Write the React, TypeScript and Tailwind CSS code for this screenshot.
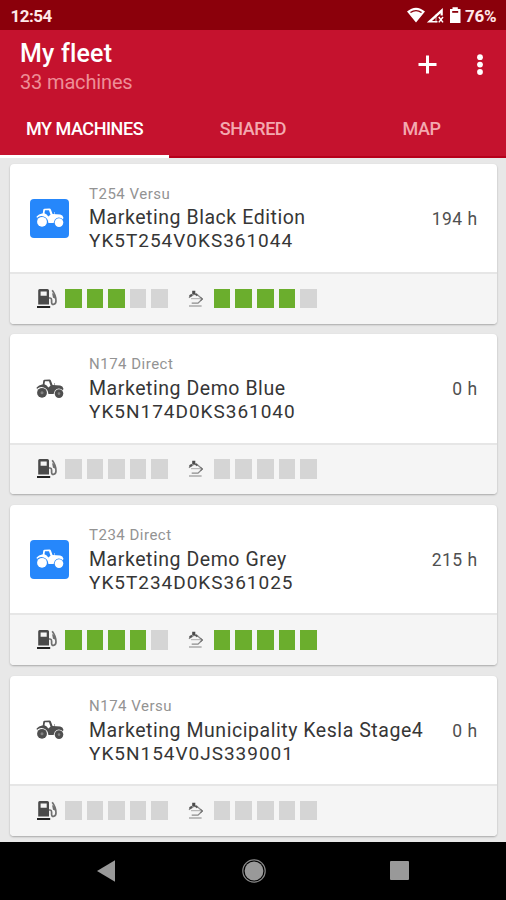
import React from "react";

type Machine = {
  model: string;
  name: string;
  serial: string;
  hours: string;
  active: boolean;
  fuel: number;
  adblue: number;
};

const machines: Machine[] = [
  { model: "T254 Versu", name: "Marketing Black Edition", serial: "YK5T254V0KS361044", hours: "194 h", active: true, fuel: 3, adblue: 4 },
  { model: "N174 Direct", name: "Marketing Demo Blue", serial: "YK5N174D0KS361040", hours: "0 h", active: false, fuel: 0, adblue: 0 },
  { model: "T234 Direct", name: "Marketing Demo Grey", serial: "YK5T234D0KS361025", hours: "215 h", active: true, fuel: 4, adblue: 5 },
  { model: "N174 Versu", name: "Marketing Municipality Kesla Stage4", serial: "YK5N154V0JS339001", hours: "0 h", active: false, fuel: 0, adblue: 0 },
];

function Tractor() {
  return (
    <svg width="28" height="20" viewBox="0 0 28 20" fill="currentColor" className="block">
      <path fillRule="evenodd" d="M.6 8.6 Q2.5 6.2 6.8 5.2 L7.2 2 Q7.4.9 8.5.8 L13.4.6 Q14.5.6 14.9 1.6 L16.6 6 L24.2 6.5 Q26.8 7 27.4 9.4 L27 11.2 Q22.5 7.8 18.9 11.5 L17.6 15 H12.4 Q12 9.9 7.8 8.5 Q4 7.3.9 9.9 Z M9 2.3 L8.5 5.3 Q11 6.4 12.3 8.4 L14.5 6.8 L13 2.3 Z" />
      <circle cx="6" cy="13.8" r="4.9" />
      <circle cx="23" cy="14.6" r="4.3" />
      <path d="M18.2 4 h.8 v3 h-.8z" opacity=".6" />
      <circle cx="6" cy="13.8" r="1.5" className="fill-white" opacity=".3" />
      <circle cx="23" cy="14.6" r="1.3" className="fill-white" opacity=".3" />
    </svg>
  );
}

function FuelPump() {
  return (
    <svg width="21" height="20" viewBox="0 0 21 20" className="block" fill="#4a4a4a">
      <path fillRule="evenodd" d="M1.2 1.5 Q1.2 0 2.6 0 H10.4 Q12 0 12 1.5 V15.6 H1.2 Z M3.6 2.4 V6.8 H9.7 V2.4 Z" />
      <path d="M0 17 h13.2 v2 H0z" fill="#222" />
      <path d="M12 9 H13 Q14.6 9.2 14.6 11 V13.4 Q14.8 15.7 16.5 15.4 Q18.9 15 19 12 Q19.1 6.5 15.2 1.3" fill="none" stroke="#707070" strokeWidth="1.7" />
      <path d="M15 4 L18 6.1 L18.4 9.8 L16 8.7 Z" fill="#707070" />
    </svg>
  );
}

function FluidIcon() {
  return (
    <svg width="16" height="18" viewBox="0 0 16 18" className="block" fill="none" stroke="#8c8c8c" strokeWidth="1.3">
      <path d="M1 7.8 L4 5.2 L8.5 3.9 L14.3 9 L10 13.2 H3.7" />
      <path d="M4.2 .8 H7.3 V4.2 H4.2Z" fill="#4a4a4a" stroke="none" />
      <path d="M1.2 5.2 L3.6 3.7 L4.6 6 L1.6 7.3Z" fill="#555" stroke="none" />
      <path d="M7.3 4 L9.4 5.6" stroke="#555" strokeWidth="1.6" />
      <path d="M3 8.7 H12.2" strokeWidth="1" stroke="#aaa" />
      <path d="M12.2 7.2 L14.3 9 L12.4 10.8" stroke="#777" />
      <path d="M1 16 H13.6" strokeWidth="1.6" stroke="#aaa" />
    </svg>
  );
}

function Level({ value }: { value: number }) {
  return (
    <div className="flex gap-[5.1px]">
      {[0, 1, 2, 3, 4].map((i) => (
        <div key={i} className={i < value ? "h-[19.5px] w-[16.5px] bg-[#6bae2d]" : "h-[19.5px] w-[16.5px] bg-[#d5d5d5]"} />
      ))}
    </div>
  );
}

function MachineCard({ m }: { m: Machine }) {
  return (
    <div className="h-[160px] w-[487px] shrink-0 overflow-hidden rounded-[4px] bg-white shadow-[0_1px_2px_rgba(0,0,0,0.28)]">
      <div className="flex h-[110.4px] items-start border-b-2 border-[#e6e6e6] pl-5 pr-[19.5px]">
        <div className={m.active ? "mt-[35px] flex h-[39px] w-[39px] items-center justify-center rounded-[4px] bg-[#2687fb] text-white" : "mt-[35px] flex h-[39px] w-[39px] items-center justify-center text-[#4f4f4f]"}>
          <Tractor />
        </div>
        <div className="ml-5 grow whitespace-nowrap">
          <div className="mt-[20.2px] h-[20px] text-[15px] leading-[20px] tracking-[0.5px] text-[#939393]">{m.model}</div>
          <div className="mt-[2.8px] h-[23px] text-[19.5px] leading-[23px] tracking-[0.55px] text-[#363636]">{m.name}</div>
          <div className="h-[23px] text-[19px] leading-[23px] tracking-[0.98px] text-[#363636]">{m.serial}</div>
        </div>
        <div className="mt-[44px] whitespace-nowrap text-[17.5px] leading-[23px] tracking-[0.45px] text-[#505050]">{m.hours}</div>
      </div>
      <div className="flex h-[50px] bg-[#f5f5f5] pl-[27px] pt-[14.8px]">
        <div className="w-[28px]"><FuelPump /></div>
        <Level value={m.fuel} />
        <div className="ml-[20px] w-[26px] pt-[1px]"><FluidIcon /></div>
        <Level value={m.adblue} />
      </div>
    </div>
  );
}

export default function App() {
  return (
    <div className="flex h-[900px] w-[506px] flex-col overflow-hidden bg-[#e8e8e8] font-[Roboto,sans-serif]">
      <div className="flex h-[30px] shrink-0 items-center justify-between bg-[#8b000b] pl-[10.5px] pr-[9.5px] pt-[2px] text-[17px] font-bold leading-[20px] text-[#ffe9e9]">
        <span className="tracking-[-0.5px]">12:54</span>
        <div className="flex items-center">
          <svg width="54" height="18" viewBox="0 0 54 18" fill="#fff" className="mr-[4px] block">
            <path fillRule="evenodd" d="M0 4.6 Q9-3.2 18 4.6 L9 15.6 Z M3 4.9 L3.9 6 Q9 2.6 14.1 6 L15 4.9 Q9 1 3 4.9Z" />
            <path fillRule="evenodd" d="M19.8 15.6 L35.8 1 V8.5 H33.6 V6.2 L25 14 H30.5 V15.6 Z" />
            <path d="M31.8 10 L36 15.4 M36 10 L31.8 15.4" stroke="#fff" strokeWidth="1.5" />
            <path d="M29 7.5 V15.5" stroke="#fff" strokeWidth="1.2" opacity=".6" />
            <path d="M43 2 H45.5 V.2 H50.8 V2 H53.5 V16 H43Z" />
            <path d="M45.2 4 h6 v1.8 h-6z" fill="#8b000b" />
          </svg>
          <span className="tracking-[-0.2px]">76%</span>
        </div>
      </div>
      <div className="flex h-[127.5px] shrink-0 flex-col bg-[#c5122e] shadow-[inset_0_-2px_0_#b6001b]">
        <div className="flex h-[70px] shrink-0 justify-between">
          <div className="whitespace-nowrap pl-5">
            <div className="mt-[9px] text-[25px] font-medium leading-[29px] tracking-[0.2px] text-white">My fleet</div>
            <div className="mt-[1px] text-[20px] leading-[26px] tracking-[-0.15px] text-[#ee8e97]">33 machines</div>
          </div>
          <div className="flex">
            <svg width="19" height="19" viewBox="0 0 19 19" className="mr-[39.5px] mt-[25px] block"><path d="M9.5 .5V18.5M.5 9.5H18.5" stroke="#fff" strokeWidth="3" /></svg>
            <svg width="6" height="22" viewBox="0 0 6 22" fill="#fff" className="mr-[23.5px] mt-[24px] block"><circle cx="3" cy="3.2" r="2.9" /><circle cx="3" cy="10.6" r="2.9" /><circle cx="3" cy="18" r="2.9" /></svg>
          </div>
        </div>
        <div className="flex grow text-[18px] font-medium leading-[22px] tracking-[-0.45px] text-[#f3a9b0]">
          <div className="w-[169px] border-b-[3px] border-white pt-[18px] text-center text-white">MY MACHINES</div>
          <div className="w-[168px] pt-[18px] text-center">SHARED</div>
          <div className="w-[169px] pt-[18px] text-center">MAP</div>
        </div>
      </div>
      <div className="flex h-[684px] shrink-0 flex-col gap-[10.7px] overflow-hidden pl-[10px] pt-[6px]">
        {machines.map((m) => <MachineCard key={m.serial} m={m} />)}
      </div>
      <div className="flex grow bg-black">
        <svg width="18" height="22" viewBox="0 0 18 22" className="ml-[97px] mt-[18px] block"><path d="M0 11 L18 .3V21.7Z" fill="#999" /></svg>
        <svg width="24" height="24" viewBox="0 0 24 24" className="ml-[126.5px] mt-[17px] block"><circle cx="12" cy="12" r="11.2" fill="none" stroke="#888" strokeWidth="1.2" /><circle cx="12" cy="12" r="9.4" fill="#999" /></svg>
        <div className="ml-[124px] mt-[19.5px] h-[19px] w-[19.5px] rounded-[1px] bg-[#999]" />
      </div>
    </div>
  );
}
